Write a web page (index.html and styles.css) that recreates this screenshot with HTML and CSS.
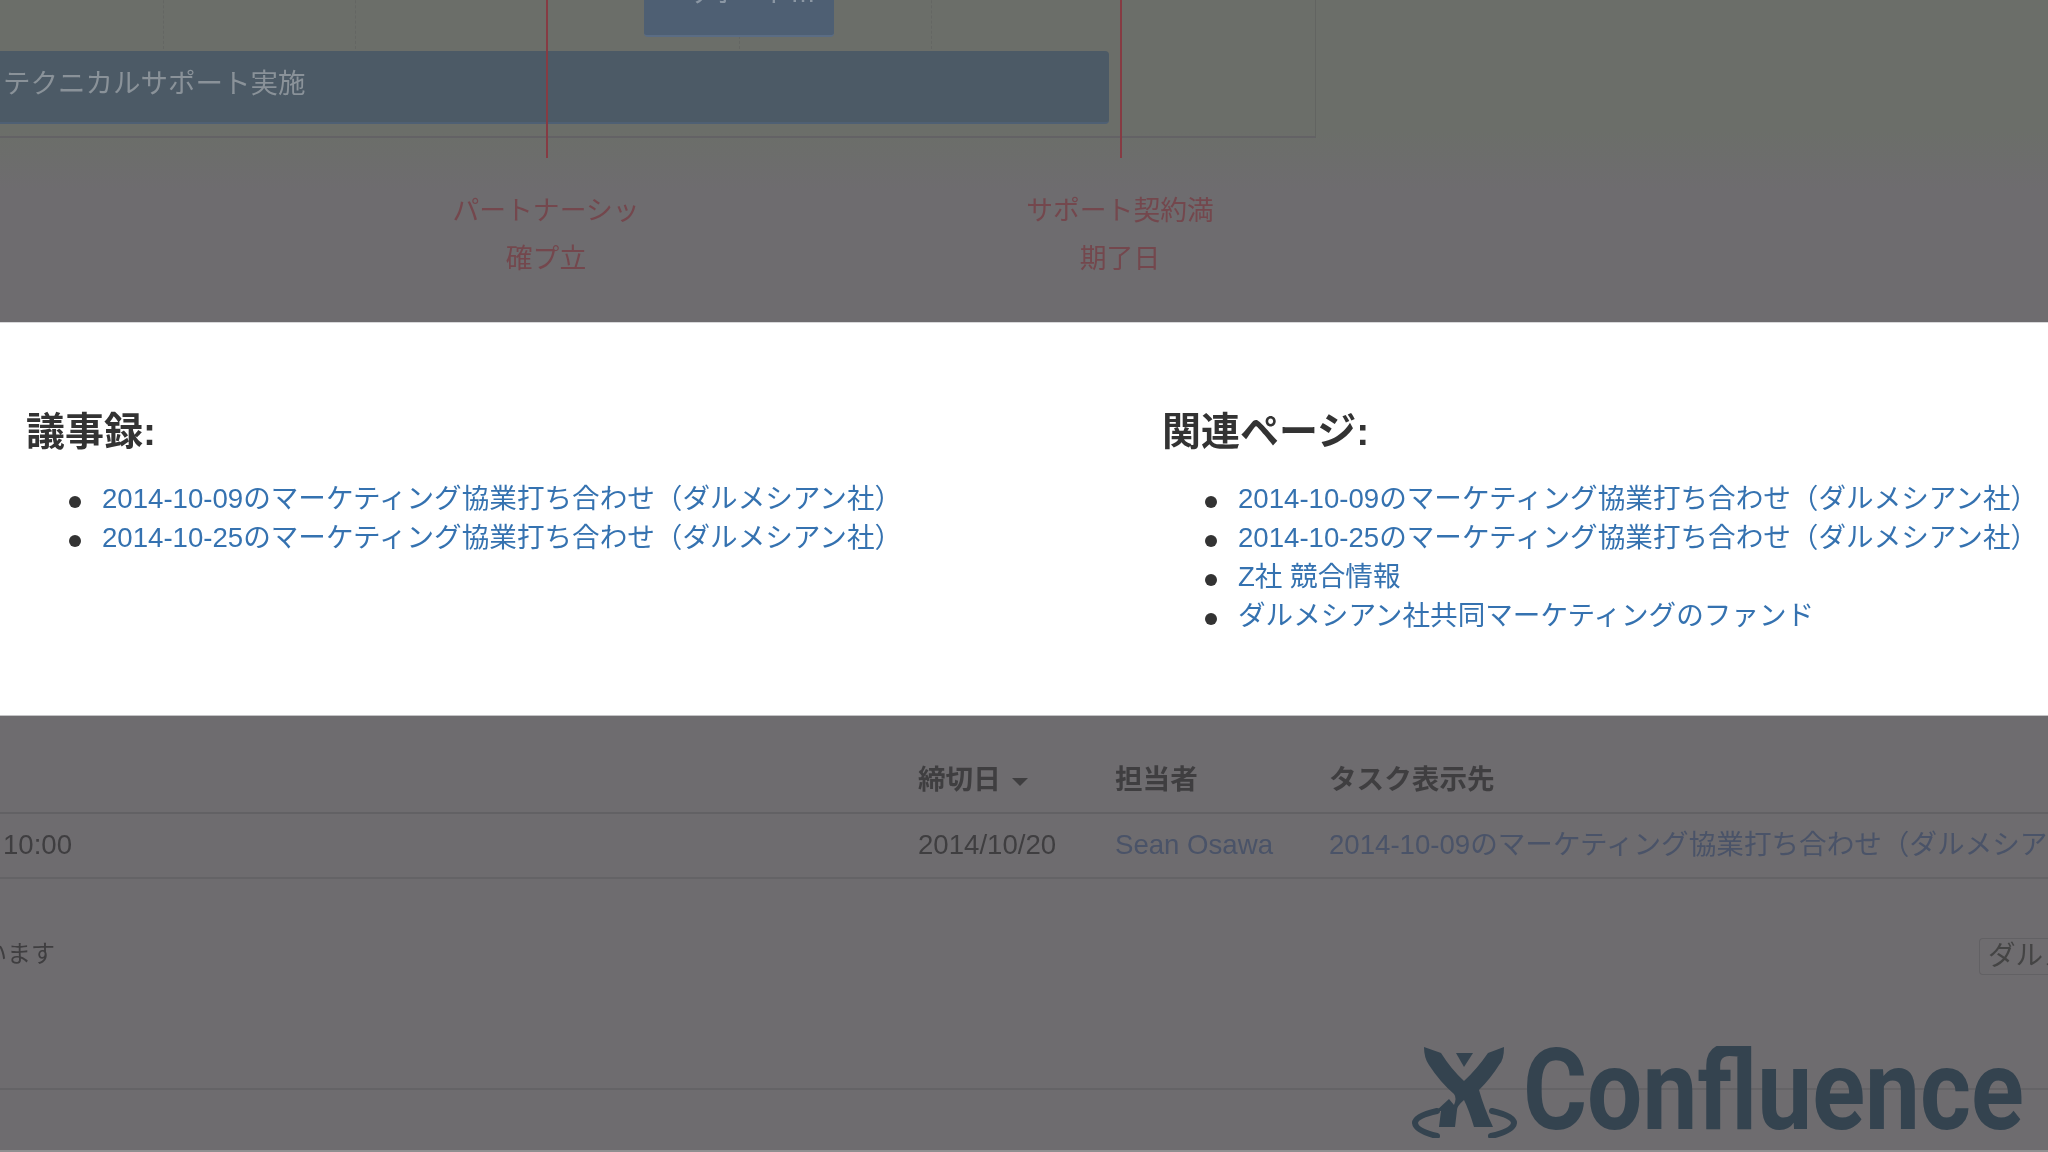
FILE: index.html
```html
<!DOCTYPE html>
<html lang="ja">
<head>
<meta charset="utf-8">
<title>Confluence</title>
<link rel="stylesheet" href="styles.css">
</head>
<body>
<section class="dim timeline">
  <div class="chart">
    <i class="grid g1"></i><i class="grid g2"></i><i class="grid g4"></i><i class="grid g5"></i>
    <div class="bar small">サポート…</div>
    <div class="bar wide">テクニカルサポート実施</div>
  </div>
  <i class="marker m1"></i>
  <i class="marker m2"></i>
  <div class="milestone ms1">パートナーシッ<br>確プ立</div>
  <div class="milestone ms2">サポート契約満<br>期了日</div>
</section>

<section class="notes">
  <div class="col col-left">
    <h2>議事録:</h2>
    <ul>
      <li><a>2014-10-09のマーケティング協業打ち合わせ（ダルメシアン社）</a></li>
      <li><a>2014-10-25のマーケティング協業打ち合わせ（ダルメシアン社）</a></li>
    </ul>
  </div>
  <div class="col col-right">
    <h2>関連ページ:</h2>
    <ul>
      <li><a>2014-10-09のマーケティング協業打ち合わせ（ダルメシアン社）</a></li>
      <li><a>2014-10-25のマーケティング協業打ち合わせ（ダルメシアン社）</a></li>
      <li><a>Z社 競合情報</a></li>
      <li><a>ダルメシアン社共同マーケティングのファンド</a></li>
    </ul>
  </div>
</section>

<section class="dim tasks">
  <div class="row head">
    <div></div>
    <div>締切日 <span class="caret"></span></div>
    <div>担当者</div>
    <div>タスク表示先</div>
  </div>
  <div class="row body-row">
    <div class="time">10:00</div>
    <div>2014/10/20</div>
    <div class="person">Sean Osawa</div>
    <div class="person">2014-10-09のマーケティング協業打ち合わせ（ダルメシアン社）</div>
  </div>
  <div class="meta">
    <span class="meta-text">います</span>
    <span class="tag">ダルメシアン</span>
  </div>
  <div class="foot-line"></div>
  <div class="logo">
    <svg class="logo-mark" viewBox="0 0 105 92" aria-hidden="true">
      <path class="fill" d="M12 1 L29 7 Q39 23 52 35 Q65 23 76 7 L92 1 Q92 14 87 19 Q79 32 67 44 Q72 62 81 81 L62 81 Q57 64 52 54 Q45 60 45 64 L43 81 L27 81 L29 65 L24 65 L37 53 L42 59 Q45 52 42 48 Q28 36 17 19 Q12 12 12 1 Z"/>
      <path class="fill" d="M44 7 L61 7 L52 21 Z" />
      <path class="arc" d="M25 65 Q3 70 3 77 Q4 85 25 90"/>
      <path class="arc" d="M80 65 Q102 70 102 77 Q101 85 79 90"/>
    </svg>
    <svg class="logo-word" viewBox="0 0 503 92" aria-label="Confluence">
      <text x="0" y="83" textLength="501" lengthAdjust="spacingAndGlyphs">Confluence</text>
    </svg>
  </div>
</section>
</body>
</html>
```

FILE: styles.css
```css
* { box-sizing: border-box; }

html, body {
  margin: 0;
  height: 1152px;
  overflow: hidden;
}

body {
  display: flex;
  flex-direction: column;
  font-family: "Liberation Sans", "Noto Sans CJK JP", sans-serif;
  background: #fff;
}

.dim {
  background: #6e6c6f;
  overflow: hidden;
  filter: blur(0.6px);
}

/* top: dimmed gantt */
.timeline {
  position: relative;
  height: 322px;
  flex: none;
  background: linear-gradient(#6b6e69 0, #6b6e69 130px, #6e6c6f 190px);
}

.chart {
  position: absolute;
  left: -2px;
  top: -20px;
  width: 1318px;
  height: 158px;
  border-right: 1px solid #626461;
  border-bottom: 2px solid #636265;
}

.grid {
  position: absolute;
  top: 0;
  height: 69px;
  border-left: 1px dashed #646663;
}
.g1 { left: 165px; }
.g2 { left: 357px; }
.g4 { left: 741px; }
.g5 { left: 933px; }

.bar {
  position: absolute;
  border-radius: 4px;
  color: #8a9299;
  white-space: nowrap;
  overflow: hidden;
}
.bar.small {
  left: 646px;
  top: 0;
  width: 190px;
  height: 57px;
  background: #4e5f73;
  border-bottom: 2px solid #5a6c84;
  font-size: 26px;
  line-height: 27px;
  padding-left: 42px;
  color: #8b97a4;
}
.bar.wide {
  left: 0;
  top: 71px;
  width: 1111px;
  height: 73px;
  background: #4c5a66;
  border-bottom: 2px solid #4f6074;
  border-radius: 0 4px 4px 0;
  font-size: 27.5px;
  line-height: 65px;
  padding-left: 5px;
}

.marker {
  position: absolute;
  top: 0;
  width: 2px;
  height: 158px;
  background: #863b43;
}
.m1 { left: 546px; }
.m2 { left: 1120px; }

.milestone {
  position: absolute;
  top: 187px;
  width: 240px;
  text-align: center;
  font-size: 26.8px;
  line-height: 48px;
  color: #74474d;
}
.ms1 { left: 426px; }
.ms2 { left: 1000px; }

/* middle: highlighted white band */
.notes {
  flex: none;
  height: 394px;
  display: grid;
  grid-template-columns: 1162px 1fr;
  padding-top: 84px;
  background: #fff;
  border-top: 1px solid #d8d8da;
  border-bottom: 1px solid #c4c4c6;
}

.col { filter: blur(0.35px); }
.col-left { padding-left: 26px; }

.col h2 {
  margin: 0 0 22px;
  font-size: 39px;
  line-height: 50px;
  font-weight: 700;
  color: #333;
}

.col ul {
  margin: 0;
  padding: 0 0 0 76px;
  list-style: none;
  font-size: 27.6px;
  line-height: 39px;
  color: #333;
}

.col li::before {
  content: "";
  display: inline-block;
  width: 12px;
  height: 12px;
  margin: 0 21px 0 -33px;
  border-radius: 50%;
  background: #333;
  vertical-align: 0;
}

.col a {
  color: #3572b0;
  white-space: nowrap;
}

/* bottom: dimmed task table */
.tasks {
  flex: 1;
  position: relative;
  border-bottom: 2px solid #8f8f90;
  color: #3f3e40;
  font-size: 27.6px;
}

.row {
  display: grid;
  grid-template-columns: 918px 197px 214px 1fr;
  white-space: nowrap;
  overflow: hidden;
}
.row.head {
  height: 98px;
  padding-top: 44px;
  line-height: 40px;
  font-weight: 700;
  border-bottom: 2px solid #626164;
}
.row.body-row {
  height: 65px;
  line-height: 62px;
  border-bottom: 2px solid #646366;
}
.time { padding-left: 3px; }
.person { color: #4a5368; }

.caret {
  display: inline-block;
  width: 0;
  height: 0;
  margin: 0 0 3px 4px;
  border-left: 8px solid transparent;
  border-right: 8px solid transparent;
  border-top: 8px solid #3f3e40;
}

.meta {
  display: flex;
  justify-content: space-between;
  align-items: center;
  height: 211px;
  padding-bottom: 64px;
  font-size: 24px;
  border-bottom: 2px solid #646366;
  white-space: nowrap;
  overflow: hidden;
}
.meta-text { margin-left: -17px; }
.tag {
  flex: none;
  width: 69px;
  height: 37px;
  margin-top: 9px;
  padding-left: 8px;
  font-size: 27.6px;
  line-height: 34px;
  border: 1px solid #626164;
  border-right: 0;
  border-radius: 4px 0 0 4px;
  overflow: hidden;
  color: #444;
}

.foot-line { height: 60px; }

.logo {
  position: absolute;
  left: 1412px;
  top: 330px;
  display: flex;
  gap: 6px;
}
.logo-mark { width: 105px; height: 92px; flex: none; }
.logo-word { width: 503px; height: 92px; flex: none; }
.fill { fill: #34434f; }
.arc { fill: none; stroke: #34434f; stroke-width: 6; stroke-linecap: round; }
.logo-word text {
  font-family: Roboto, "Liberation Sans", sans-serif;
  font-size: 114px;
  font-weight: 700;
  fill: #34434f;
}
```
